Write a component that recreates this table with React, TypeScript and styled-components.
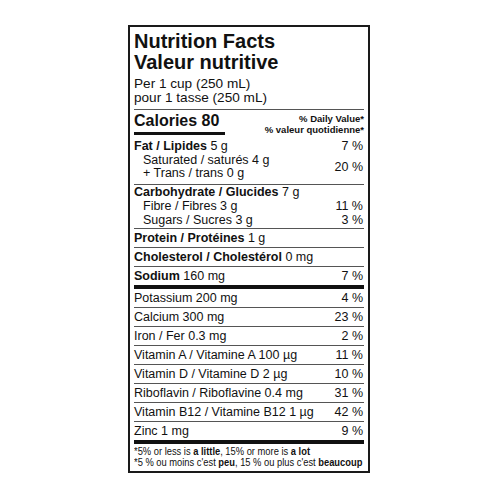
import styled, { createGlobalStyle } from "styled-components";

const GlobalStyle = createGlobalStyle`
  body {
    margin: 0;
    background: #ffffff;
    color: #111111;
    font-family: "Liberation Sans", Arial, sans-serif;
  }
`;

const Page = styled.div`
  width: 500px;
  height: 500px;
  box-sizing: border-box;
  padding: 25px 0 0 128px;
`;

const Label = styled.div`
  width: 242px;
  box-sizing: border-box;
  border: 2px solid #1a1a1a;
  padding: 0 4px;
`;

const Title = styled.div`
  font-size: 20px;
  font-weight: 700;
  line-height: 21px;
  padding-top: 4px;
`;

const Serving = styled.div`
  font-size: 13.6px;
  line-height: 14px;
  margin-top: 4px;
  padding-bottom: 4px;
  border-bottom: 1px solid #555555;
`;

const CaloriesRow = styled.div`
  display: flex;
  justify-content: space-between;
  align-items: flex-start;
  padding-top: 2px;
`;

const Calories = styled.div`
  width: 91px;
  font-size: 16px;
  font-weight: 700;
  line-height: 18px;
  padding-bottom: 2px;
  border-bottom: 3px solid #111111;
`;

const DailyValue = styled.div`
  font-size: 9.5px;
  font-weight: 700;
  line-height: 11px;
  text-align: right;
  padding-top: 1px;
`;

const Group = styled.div<{ $top?: number; $bottom?: number; $rule?: boolean }>`
  padding-top: ${({ $top }) => $top ?? 0}px;
  padding-bottom: ${({ $bottom }) => $bottom ?? 0}px;
  border-top: ${({ $rule }) => ($rule ? "1px solid #555555" : "none")};
`;

const Line = styled.div<{ $indent?: boolean; $height?: number }>`
  display: flex;
  justify-content: space-between;
  align-items: center;
  font-size: 12.5px;
  line-height: ${({ $height }) => $height ?? 14}px;
  padding-left: ${({ $indent }) => ($indent ? 9 : 0)}px;
`;

const Pair = styled.div`
  display: flex;
  justify-content: space-between;
  align-items: center;
  font-size: 12.5px;
  line-height: 13px;
  padding-left: 9px;
`;

const Row = styled.div<{ $rule?: "thin" | "thick" }>`
  display: flex;
  justify-content: space-between;
  font-size: 12.5px;
  line-height: 18px;
  border-top: ${({ $rule }) =>
    $rule === "thick" ? "4px solid #111111" : "1px solid #555555"};
`;

const Strong = styled.span`
  font-weight: 700;
`;

const Pct = styled.span`
  padding-right: 1px;
`;

const Footnote = styled.div`
  border-top: 4px solid #111111;
  padding: 2px 0 3px;
  font-size: 11.4px;
  line-height: 10.8px;
`;

// condensed face: the narrow family is not installed, so squeeze Liberation Sans
const FootLine = styled.div`
  white-space: nowrap;
  transform: scaleX(0.82);
  transform-origin: left center;
`;

const rows = [
  { name: "Potassium 200 mg", pct: "4 %" },
  { name: "Calcium 300 mg", pct: "23 %" },
  { name: "Iron / Fer 0.3 mg", pct: "2 %" },
  { name: "Vitamin A / Vitamine A 100 µg", pct: "11 %" },
  { name: "Vitamin D / Vitamine D 2 µg", pct: "10 %" },
  { name: "Riboflavin / Riboflavine 0.4 mg", pct: "31 %" },
  { name: "Vitamin B12 / Vitamine B12 1 µg", pct: "42 %" },
  { name: "Zinc 1 mg", pct: "9 %" },
];

export default function App() {
  return (
    <Page>
      <GlobalStyle />
      <Label>
        <Title>
          Nutrition Facts
          <br />
          Valeur nutritive
        </Title>
        <Serving>
          Per 1 cup (250 mL)
          <br />
          pour 1 tasse (250 mL)
        </Serving>
        <CaloriesRow>
          <Calories>Calories 80</Calories>
          <DailyValue>
            % Daily Value*
            <br />% valeur quotidienne*
          </DailyValue>
        </CaloriesRow>
        <Group $top={4} $bottom={4}>
          <Line $height={15}>
            <span>
              <Strong>Fat / Lipides</Strong> 5 g
            </span>
            <Pct>7 %</Pct>
          </Line>
          <Pair>
            <div>
              Saturated / saturés 4 g
              <br />+ Trans / trans 0 g
            </div>
            <Pct>20 %</Pct>
          </Pair>
        </Group>
        <Group $rule $bottom={1}>
          <Line>
            <span>
              <Strong>Carbohydrate / Glucides</Strong> 7 g
            </span>
          </Line>
          <Line $indent>
            <span>Fibre / Fibres 3 g</span>
            <Pct>11 %</Pct>
          </Line>
          <Line $indent>
            <span>Sugars / Sucres 3 g</span>
            <Pct>3 %</Pct>
          </Line>
        </Group>
        <Row>
          <span>
            <Strong>Protein / Protéines</Strong> 1 g
          </span>
        </Row>
        <Row>
          <span>
            <Strong>Cholesterol / Cholestérol</Strong> 0 mg
          </span>
        </Row>
        <Row>
          <span>
            <Strong>Sodium</Strong> 160 mg
          </span>
          <Pct>7 %</Pct>
        </Row>
        {rows.map((r, i) => (
          <Row key={r.name} $rule={i === 0 ? "thick" : "thin"}>
            <span>{r.name}</span>
            <Pct>{r.pct}</Pct>
          </Row>
        ))}
        <Footnote>
          <FootLine>
            *5% or less is <Strong>a little</Strong>, 15% or more is{" "}
            <Strong>a lot</Strong>
          </FootLine>
          <FootLine>
            *5 % ou moins c'est <Strong>peu</Strong>, 15 % ou plus c'est{" "}
            <Strong>beaucoup</Strong>
          </FootLine>
        </Footnote>
      </Label>
    </Page>
  );
}
